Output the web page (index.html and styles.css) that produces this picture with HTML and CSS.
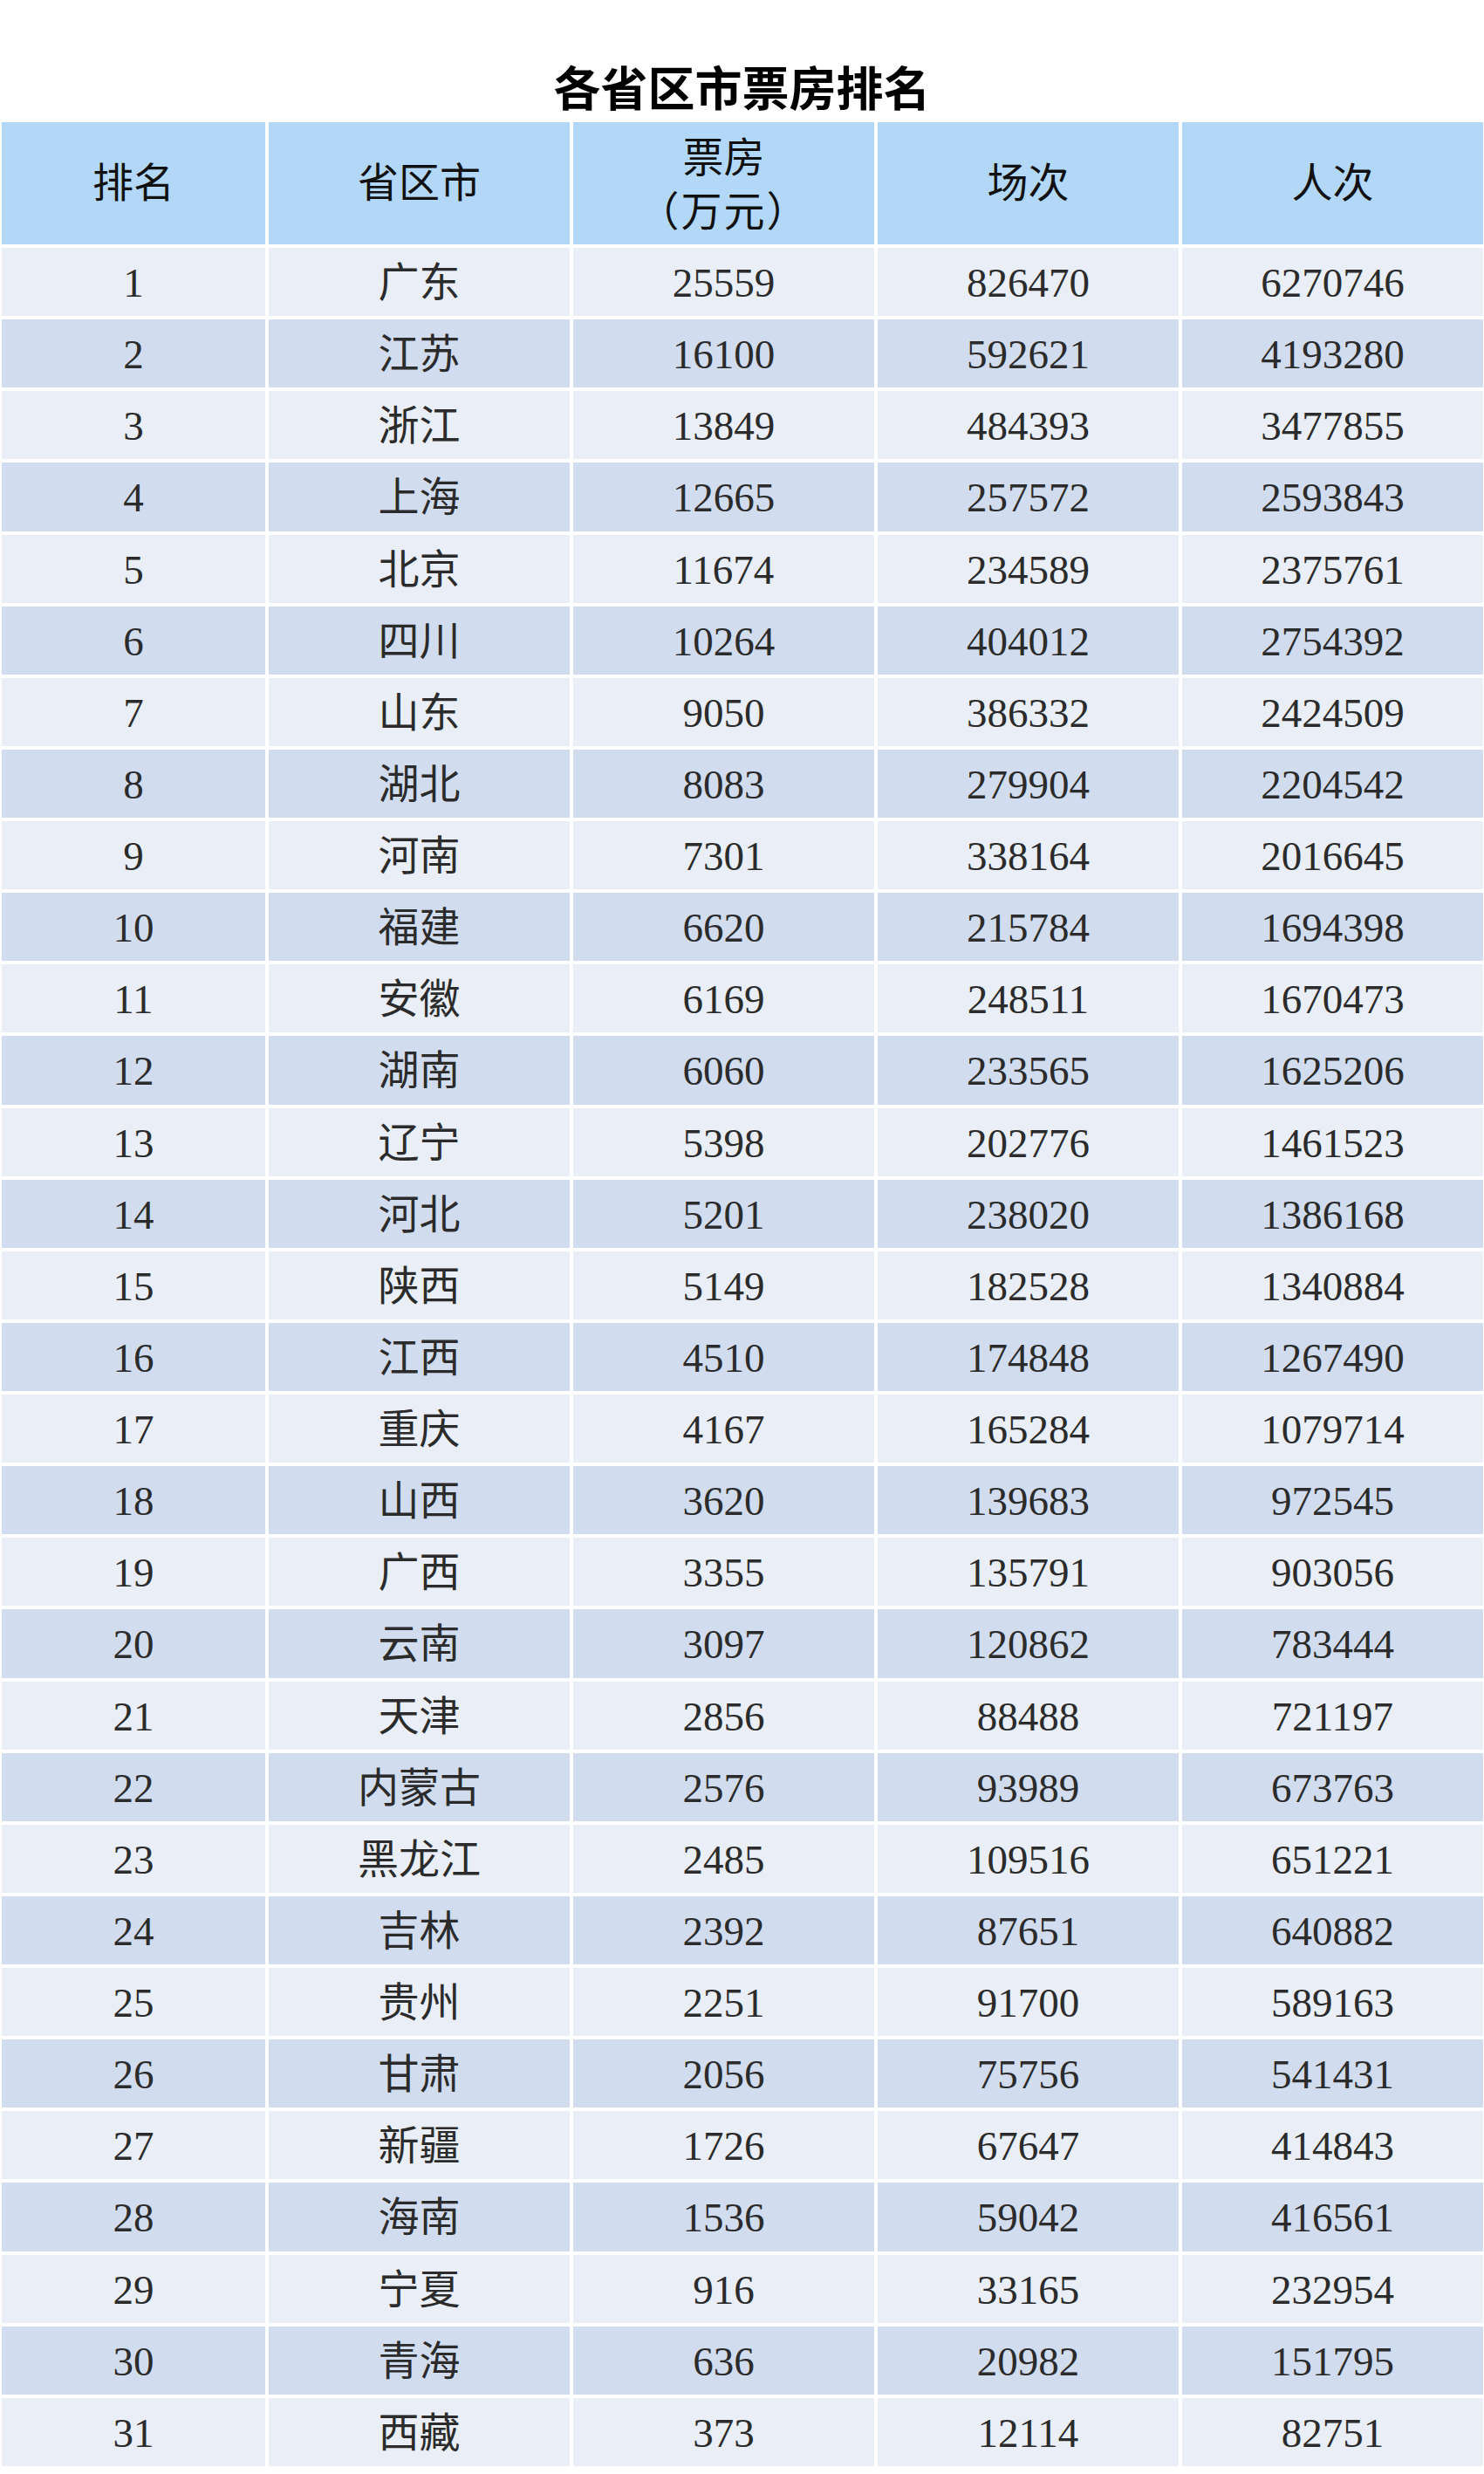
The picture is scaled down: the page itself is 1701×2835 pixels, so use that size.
FILE: index.html
```html
<!DOCTYPE html>
<html lang="zh-CN">
<head>
<meta charset="utf-8">
<title>各省区市票房排名</title>
<link rel="stylesheet" href="styles.css">
</head>
<body>
<div class="page">
  <h1 class="title">各省区市票房排名</h1>
  <div class="table">
    <div class="row head">
      <div class="cell">排名</div>
      <div class="cell">省区市</div>
      <div class="cell two"><span>票房</span><span class="unit">（万元）</span></div>
      <div class="cell">场次</div>
      <div class="cell">人次</div>
    </div>
    <div class="row a"><div class="cell">1</div><div class="cell">广东</div><div class="cell">25559</div><div class="cell">826470</div><div class="cell">6270746</div></div>
    <div class="row b"><div class="cell">2</div><div class="cell">江苏</div><div class="cell">16100</div><div class="cell">592621</div><div class="cell">4193280</div></div>
    <div class="row a"><div class="cell">3</div><div class="cell">浙江</div><div class="cell">13849</div><div class="cell">484393</div><div class="cell">3477855</div></div>
    <div class="row b"><div class="cell">4</div><div class="cell">上海</div><div class="cell">12665</div><div class="cell">257572</div><div class="cell">2593843</div></div>
    <div class="row a"><div class="cell">5</div><div class="cell">北京</div><div class="cell">11674</div><div class="cell">234589</div><div class="cell">2375761</div></div>
    <div class="row b"><div class="cell">6</div><div class="cell">四川</div><div class="cell">10264</div><div class="cell">404012</div><div class="cell">2754392</div></div>
    <div class="row a"><div class="cell">7</div><div class="cell">山东</div><div class="cell">9050</div><div class="cell">386332</div><div class="cell">2424509</div></div>
    <div class="row b"><div class="cell">8</div><div class="cell">湖北</div><div class="cell">8083</div><div class="cell">279904</div><div class="cell">2204542</div></div>
    <div class="row a"><div class="cell">9</div><div class="cell">河南</div><div class="cell">7301</div><div class="cell">338164</div><div class="cell">2016645</div></div>
    <div class="row b"><div class="cell">10</div><div class="cell">福建</div><div class="cell">6620</div><div class="cell">215784</div><div class="cell">1694398</div></div>
    <div class="row a"><div class="cell">11</div><div class="cell">安徽</div><div class="cell">6169</div><div class="cell">248511</div><div class="cell">1670473</div></div>
    <div class="row b"><div class="cell">12</div><div class="cell">湖南</div><div class="cell">6060</div><div class="cell">233565</div><div class="cell">1625206</div></div>
    <div class="row a"><div class="cell">13</div><div class="cell">辽宁</div><div class="cell">5398</div><div class="cell">202776</div><div class="cell">1461523</div></div>
    <div class="row b"><div class="cell">14</div><div class="cell">河北</div><div class="cell">5201</div><div class="cell">238020</div><div class="cell">1386168</div></div>
    <div class="row a"><div class="cell">15</div><div class="cell">陕西</div><div class="cell">5149</div><div class="cell">182528</div><div class="cell">1340884</div></div>
    <div class="row b"><div class="cell">16</div><div class="cell">江西</div><div class="cell">4510</div><div class="cell">174848</div><div class="cell">1267490</div></div>
    <div class="row a"><div class="cell">17</div><div class="cell">重庆</div><div class="cell">4167</div><div class="cell">165284</div><div class="cell">1079714</div></div>
    <div class="row b"><div class="cell">18</div><div class="cell">山西</div><div class="cell">3620</div><div class="cell">139683</div><div class="cell">972545</div></div>
    <div class="row a"><div class="cell">19</div><div class="cell">广西</div><div class="cell">3355</div><div class="cell">135791</div><div class="cell">903056</div></div>
    <div class="row b"><div class="cell">20</div><div class="cell">云南</div><div class="cell">3097</div><div class="cell">120862</div><div class="cell">783444</div></div>
    <div class="row a"><div class="cell">21</div><div class="cell">天津</div><div class="cell">2856</div><div class="cell">88488</div><div class="cell">721197</div></div>
    <div class="row b"><div class="cell">22</div><div class="cell">内蒙古</div><div class="cell">2576</div><div class="cell">93989</div><div class="cell">673763</div></div>
    <div class="row a"><div class="cell">23</div><div class="cell">黑龙江</div><div class="cell">2485</div><div class="cell">109516</div><div class="cell">651221</div></div>
    <div class="row b"><div class="cell">24</div><div class="cell">吉林</div><div class="cell">2392</div><div class="cell">87651</div><div class="cell">640882</div></div>
    <div class="row a"><div class="cell">25</div><div class="cell">贵州</div><div class="cell">2251</div><div class="cell">91700</div><div class="cell">589163</div></div>
    <div class="row b"><div class="cell">26</div><div class="cell">甘肃</div><div class="cell">2056</div><div class="cell">75756</div><div class="cell">541431</div></div>
    <div class="row a"><div class="cell">27</div><div class="cell">新疆</div><div class="cell">1726</div><div class="cell">67647</div><div class="cell">414843</div></div>
    <div class="row b"><div class="cell">28</div><div class="cell">海南</div><div class="cell">1536</div><div class="cell">59042</div><div class="cell">416561</div></div>
    <div class="row a"><div class="cell">29</div><div class="cell">宁夏</div><div class="cell">916</div><div class="cell">33165</div><div class="cell">232954</div></div>
    <div class="row b"><div class="cell">30</div><div class="cell">青海</div><div class="cell">636</div><div class="cell">20982</div><div class="cell">151795</div></div>
    <div class="row a"><div class="cell">31</div><div class="cell">西藏</div><div class="cell">373</div><div class="cell">12114</div><div class="cell">82751</div></div>
  </div>
</div>
</body>
</html>
```
FILE: styles.css
```css
html, body {
  margin: 0;
  padding: 0;
  background: #ffffff;
}

.page {
  width: 1701px;
  height: 2835px;
  overflow: hidden;
}

.title {
  margin: 0;
  padding-top: 72px;
  height: 54px;
  margin-bottom: 14px;
  text-align: center;
  font-family: "Noto Sans CJK SC", "Noto Sans", sans-serif;
  font-weight: 700;
  font-size: 54px;
  line-height: 54px;
  color: #000000;
}

.table {
  display: flex;
  flex-direction: column;
  gap: 4px;
  padding-left: 2px;
}

.row {
  display: grid;
  grid-template-columns: 302px 345px 345px 345px 345px;
  column-gap: 4px;
  height: 78.13px;
}

.row.head {
  height: 140px;
}

.cell {
  display: flex;
  flex-direction: column;
  align-items: center;
  justify-content: center;
  padding-top: 3px;
  font-family: "Liberation Serif", "Noto Sans CJK SC", serif;
  font-size: 47px;
  line-height: 57px;
  color: #2b2b2b;
}

.head .cell {
  padding-top: 0;
  background: #b3d8f7;
  color: #111111;
}

.unit {
  font-family: "Noto Sans CJK SC", sans-serif;
  letter-spacing: 2px;
}

.row.a .cell {
  background: #e9eef7;
}

.row.b .cell {
  background: #d1ddef;
}
```
